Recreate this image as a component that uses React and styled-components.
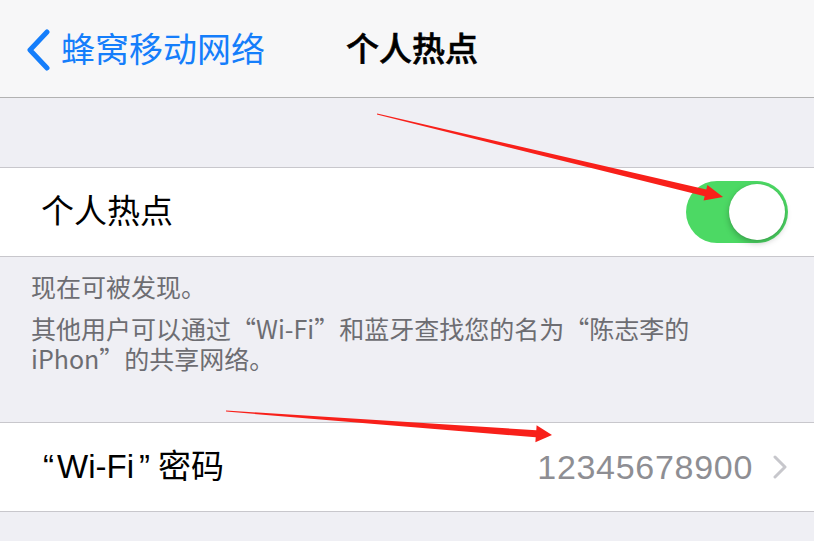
import React from 'react';
import styled, { createGlobalStyle } from 'styled-components';

const GlobalStyle = createGlobalStyle`
  html, body {
    margin: 0;
    padding: 0;
    background: #efeff4;
  }
  * {
    box-sizing: border-box;
  }
`;

const FONT = `"Liberation Sans", "Noto Sans CJK SC", sans-serif`;
const CJK_FONT = `"Noto Sans CJK SC", "Liberation Sans", sans-serif`;

const Screen = styled.div`
  position: relative;
  width: 814px;
  height: 541px;
  overflow: hidden;
  background: #efeff4;
  font-family: ${FONT};
`;

const NavBar = styled.div`
  display: grid;
  grid-template-columns: 1fr auto 1fr;
  align-items: center;
  height: 98px;
  padding: 0 25px;
  background: #f7f7f8;
  border-bottom: 1px solid #b2b2b2;
`;

const BackButton = styled.div`
  display: flex;
  align-items: center;
  gap: 10px;
  color: #157efb;
  font-size: 34px;
  line-height: 40px;
  padding-top: 2px;
`;

const NavTitle = styled.div`
  color: #000;
  font-size: 33px;
  font-weight: 500;
  -webkit-text-stroke: 0.6px #000;
  line-height: 40px;
  padding-left: 10px;
  padding-top: 2px;
`;

const Spacer = styled.div`
  height: ${p => p.$h}px;
`;

const Cell = styled.div`
  display: flex;
  align-items: center;
  justify-content: space-between;
  height: 90px;
  padding: 0 26px 0 41px;
  background: #fff;
  border-top: 1px solid #c8c7cc;
  border-bottom: 1px solid #c8c7cc;
`;

const CellLabel = styled.div`
  color: #000;
  font-size: 33px;
  line-height: 40px;
`;

const Quote = styled.span`
  margin: 0 ${p => p.$r || 0}px 0 ${p => p.$l || 0}px;
`;

const CellValue = styled.div`
  display: flex;
  align-items: center;
  gap: 19px;
  color: #8e8e93;
  font-size: 34px;
  letter-spacing: 0.7px;
  line-height: 40px;
`;

const Toggle = styled.div`
  position: relative;
  width: 102px;
  height: 62px;
  border-radius: 31px;
  background: #4cd964;
`;

const Knob = styled.div`
  position: absolute;
  top: 3px;
  right: 3px;
  width: 56px;
  height: 56px;
  border-radius: 50%;
  background: #fff;
  box-shadow: 0 3px 6px rgba(0, 0, 0, 0.25), 0 0 1px rgba(0, 0, 0, 0.15);
`;

const Footer = styled.div`
  height: 165px;
  padding: 14px 31px 0;
  color: #6d6d72;
  font-family: ${CJK_FONT};
  font-size: 25px;
  line-height: 30px;
`;

const FooterText = styled.p`
  width: 670px;
  margin: 0 0 ${p => p.$gap || 0}px;
`;

const Overlay = styled.svg`
  position: absolute;
  left: 0;
  top: 0;
  pointer-events: none;
`;

const BackChevron = () => (
  <svg width="26" height="42" viewBox="0 0 26 42">
    <path d="M22 3 L5 21 L22 39" fill="none" stroke="#157efb" strokeWidth="5" strokeLinecap="round" strokeLinejoin="round" />
  </svg>
);

const Disclosure = () => (
  <svg width="16" height="24" viewBox="0 0 16 24">
    <path d="M3 2 L13 12 L3 22" fill="none" stroke="#c7c7cc" strokeWidth="3" strokeLinecap="round" strokeLinejoin="round" />
  </svg>
);

const App = () => {
  return (
    <>
      <GlobalStyle />
      <Screen>
        <NavBar>
          <BackButton>
            <BackChevron />
            <span>蜂窝移动网络</span>
          </BackButton>
          <NavTitle>个人热点</NavTitle>
          <div />
        </NavBar>

        <Spacer $h={69} />

        <Cell>
          <CellLabel>个人热点</CellLabel>
          <Toggle>
            <Knob />
          </Toggle>
        </Cell>

        <Footer>
          <FooterText $gap={12}>现在可被发现。</FooterText>
          <FooterText>其他用户可以通过“Wi-Fi”和蓝牙查找您的名为“陈志李的iPhon”的共享网络。</FooterText>
        </Footer>

        <Cell>
          <CellLabel>
            <Quote $l={2} $r={3}>“</Quote>Wi-Fi<Quote $l={5} $r={8}>”</Quote>密码
          </CellLabel>
          <CellValue>
            <span>12345678900</span>
            <Disclosure />
          </CellValue>
        </Cell>

        <Overlay width="814" height="541" viewBox="0 0 814 541">
          <polygon
            fill="#f8201a"
            points="377.1,113.5 706.3,189.4 707.4,185.0 723,197 703.6,200.6 704.7,196.2 376.9,114.6"
          />
          <polygon
            fill="#f8201a"
            points="226,410.5 536.3,430.3 536.6,425.3 552,435 535.4,442.3 535.7,437.3 226,411.6"
          />
        </Overlay>
      </Screen>
    </>
  );
};

export default App;
